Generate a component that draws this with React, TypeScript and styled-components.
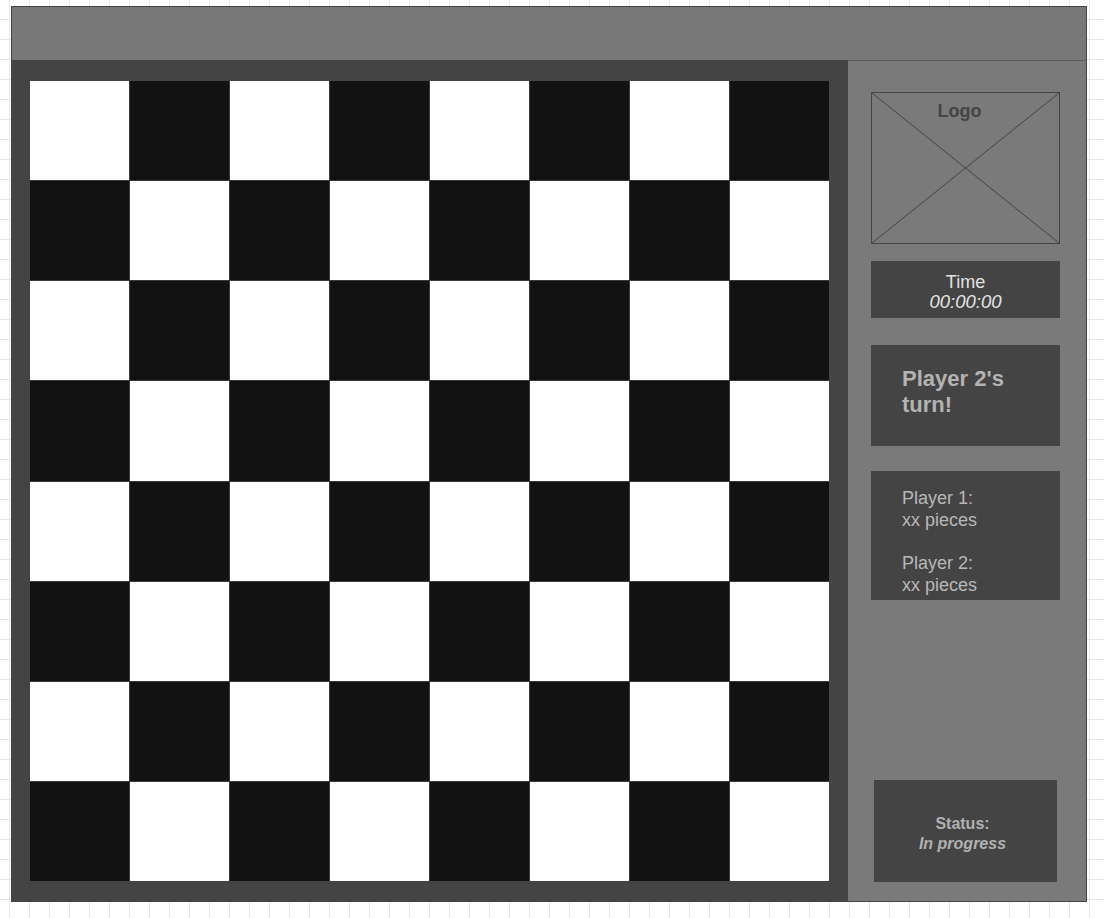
import React from 'react';
import styled, { createGlobalStyle } from 'styled-components';

const GlobalStyle = createGlobalStyle`
  html, body {
    margin: 0;
    padding: 0;
  }
  body {
    font-family: 'Liberation Sans', Arial, sans-serif;
    background-color: #ffffff;
    background-image:
      linear-gradient(to right, #e6e6e6 1px, transparent 1px),
      linear-gradient(to bottom, #e6e6e6 1px, transparent 1px);
    background-size: 20px 20px;
    background-position: 9px 19px;
    min-height: 918px;
  }
`;

const App = () => {
  const cells = [];
  for (let row = 0; row < 8; row++) {
    for (let col = 0; col < 8; col++) {
      cells.push(<Square key={`${row}-${col}`} dark={(row + col) % 2 === 1} />);
    }
  }

  return (
    <>
      <GlobalStyle />
      <Frame>
        <TopBar />
        <Main>
          <BoardPanel>
            <Board>{cells}</Board>
          </BoardPanel>
          <Sidebar>
            <LogoBox>
              <svg width="100%" height="100%" viewBox="0 0 187 150" preserveAspectRatio="none">
                <line x1="0" y1="0" x2="187" y2="150" stroke="#444" strokeWidth="1" />
                <line x1="187" y1="0" x2="0" y2="150" stroke="#444" strokeWidth="1" />
              </svg>
              <LogoText>Logo</LogoText>
            </LogoBox>
            <TimeBox>
              <div>Time</div>
              <em>00:00:00</em>
            </TimeBox>
            <TurnBox>
              Player 2's
              <br />
              turn!
            </TurnBox>
            <PiecesBox>
              <div>Player 1:</div>
              <div>xx pieces</div>
              <Spacer />
              <div>Player 2:</div>
              <div>xx pieces</div>
            </PiecesBox>
            <StatusBox>
              <div>Status:</div>
              <em>In progress</em>
            </StatusBox>
          </Sidebar>
        </Main>
      </Frame>
    </>
  );
};

export default App;

const Frame = styled.div`
  box-sizing: border-box;
  margin: 6px 0 0 11px;
  width: 1076px;
  height: 896px;
  border: 1px solid #444;
  display: flex;
  flex-direction: column;
`;

const TopBar = styled.div`
  height: 53px;
  background: #787878;
  flex-shrink: 0;
`;

const Main = styled.div`
  flex: 1;
  display: flex;
`;

const BoardPanel = styled.div`
  box-sizing: border-box;
  width: 836px;
  background: #444;
  padding: 21px 19px 20px 18px;
`;

const Board = styled.div`
  width: 799px;
  height: 800px;
  display: grid;
  grid-template-columns: repeat(8, 1fr);
  grid-template-rows: repeat(8, 1fr);
  gap: 1px;
  background: #3a3a3a;
`;

const Square = styled.div<{ dark: boolean }>`
  background: ${(p) => (p.dark ? '#121212' : '#ffffff')};
`;

const Sidebar = styled.div`
  box-sizing: border-box;
  flex: 1;
  background: #7a7a7a;
  border-top: 1px solid #5a5a5a;
  padding: 31px 0 19px 23px;
  display: flex;
  flex-direction: column;
`;

const Panel = styled.div`
  box-sizing: border-box;
  width: 189px;
  background: #444;
  color: #ababab;
`;

const LogoBox = styled.div`
  position: relative;
  box-sizing: border-box;
  width: 189px;
  height: 152px;
  border: 1px solid #444;
  svg {
    display: block;
  }
`;

const LogoText = styled.div`
  position: absolute;
  top: 8px;
  left: 0;
  right: 12px;
  text-align: center;
  font-weight: bold;
  font-size: 18px;
  color: #444;
`;

const TimeBox = styled(Panel)`
  margin-top: 17px;
  height: 57px;
  padding-top: 11px;
  text-align: center;
  color: #e2e2e2;
  font-size: 18px;
  line-height: 20px;
  em {
    display: block;
    font-size: 18.5px;
  }
`;

const TurnBox = styled(Panel)`
  margin-top: 27px;
  height: 101px;
  padding: 21px 0 0 31px;
  font-size: 22px;
  font-weight: bold;
  line-height: 25.5px;
  color: #b3b3b3;
`;

const PiecesBox = styled(Panel)`
  margin-top: 25px;
  height: 129px;
  padding: 17px 0 0 31px;
  font-size: 18px;
  line-height: 21.5px;
  color: #b8b8b8;
`;

const Spacer = styled.div`
  height: 22px;
`;

const StatusBox = styled(Panel)`
  margin-top: auto;
  margin-left: 3px;
  width: 183px;
  height: 102px;
  padding: 34px 6px 0 0;
  text-align: center;
  font-size: 16px;
  font-weight: bold;
  line-height: 20px;
  color: #b0b0b0;
  em {
    display: block;
  }
`;
